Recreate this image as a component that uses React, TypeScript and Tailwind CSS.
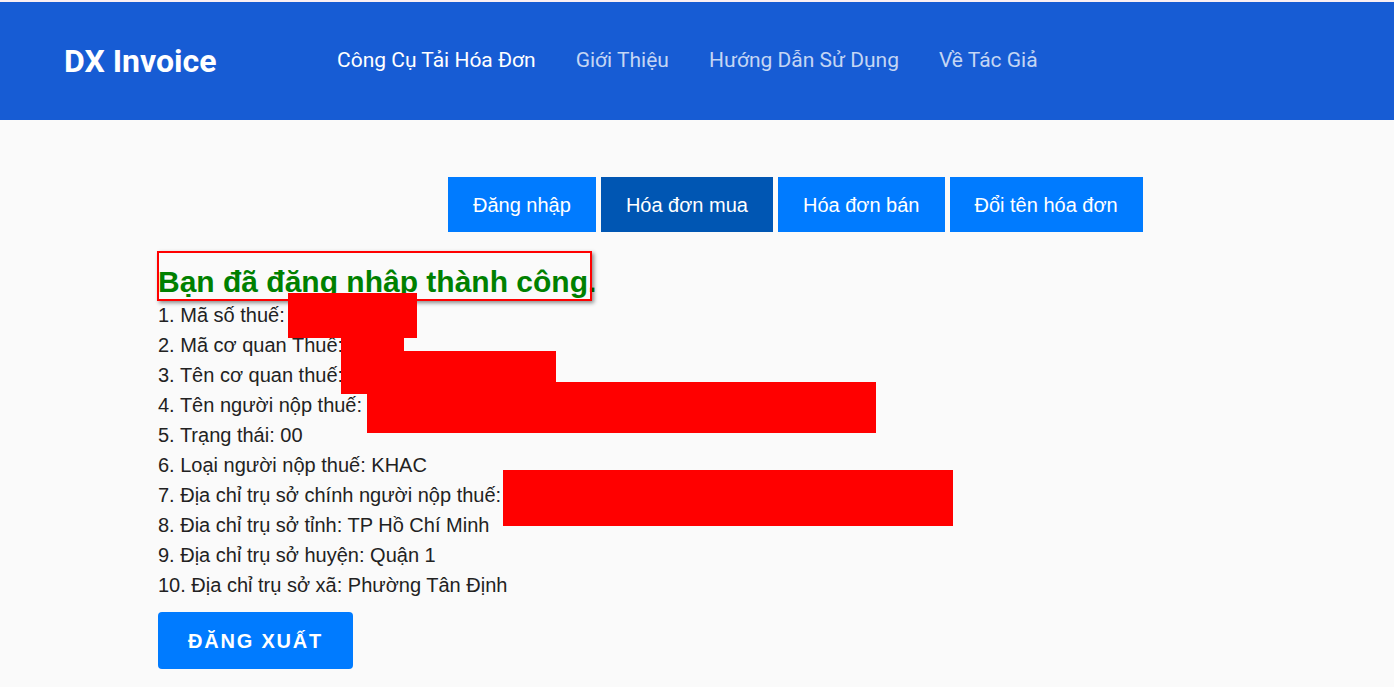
import React from "react";

const tabs = [
  { label: "Đăng nhập", active: false },
  { label: "Hóa đơn mua", active: true },
  { label: "Hóa đơn bán", active: false },
  { label: "Đổi tên hóa đơn", active: false },
];

const lines = [
  "1. Mã số thuế:",
  "2. Mã cơ quan Thuế:",
  "3. Tên cơ quan thuế:",
  "4. Tên người nộp thuế:",
  "5. Trạng thái: 00",
  "6. Loại người nộp thuế: KHAC",
  "7. Địa chỉ trụ sở chính người nộp thuế:",
  "8. Đia chỉ trụ sở tỉnh: TP Hồ Chí Minh",
  "9. Địa chỉ trụ sở huyện: Quận 1",
  "10. Địa chỉ trụ sở xã: Phường Tân Định",
];

export default function App() {
  return (
    <div className="min-h-[687px] bg-[#fafafa] font-['Liberation_Sans',Arial,sans-serif]">
      <div className="h-[2px] bg-[#fbeff2]" />
      <header className="flex h-[118px] items-center bg-[#175cd4] pl-[64px] font-['Roboto',sans-serif]">
        <div className="w-[273px] text-[32px] font-bold text-white">DX Invoice</div>
        <nav className="flex gap-[40px] text-[21px]">
          <span className="text-white">Công Cụ Tải Hóa Đơn</span>
          <span className="text-white/75">Giới Thiệu</span>
          <span className="text-white/75">Hướng Dẫn Sử Dụng</span>
          <span className="text-white/75">Về Tác Giả</span>
        </nav>
      </header>

      <main className="pl-[158px] pt-[57px]">
        <div className="ml-[290px] flex gap-[5px]">
          {tabs.map((t) => (
            <div
              key={t.label}
              className={`flex h-[55px] items-center px-[25px] text-[20px] text-white ${
                t.active ? "bg-[#0056b3]" : "bg-[#007bff]"
              }`}
            >
              {t.label}
            </div>
          ))}
        </div>

        <div className="relative mt-[32px]">
          <h1 className="h-[36px] text-[30px] font-bold leading-[36px] text-[#008000]">
            Bạn đã đăng nhập thành công.
          </h1>
          <div className="absolute left-[-1px] top-[-13px] h-[50px] w-[435px] border-2 border-[#ff0000] shadow-[2px_2px_4px_rgba(0,0,0,0.45)]" />

          <ul className="text-[20px] leading-[30px] text-[#222]">
            {lines.map((l) => (
              <li key={l}>{l}</li>
            ))}
          </ul>

          <div className="absolute left-[130px] top-[29px] h-[45px] w-[129px] bg-[#ff0000]" />
          <div className="absolute left-[183px] top-[70px] h-[18px] w-[63px] bg-[#ff0000]" />
          <div className="absolute left-[183px] top-[87px] h-[43px] w-[215px] bg-[#ff0000]" />
          <div className="absolute left-[209px] top-[118px] h-[51px] w-[509px] bg-[#ff0000]" />
          <div className="absolute left-[345px] top-[206px] h-[56px] w-[450px] bg-[#ff0000]" />

          <button className="mt-[12px] flex h-[57px] w-[195px] items-center justify-center rounded-[4px] bg-[#007bff] text-[20px] font-bold tracking-[1.8px] text-white">
            ĐĂNG XUẤT
          </button>
        </div>
      </main>
    </div>
  );
}
